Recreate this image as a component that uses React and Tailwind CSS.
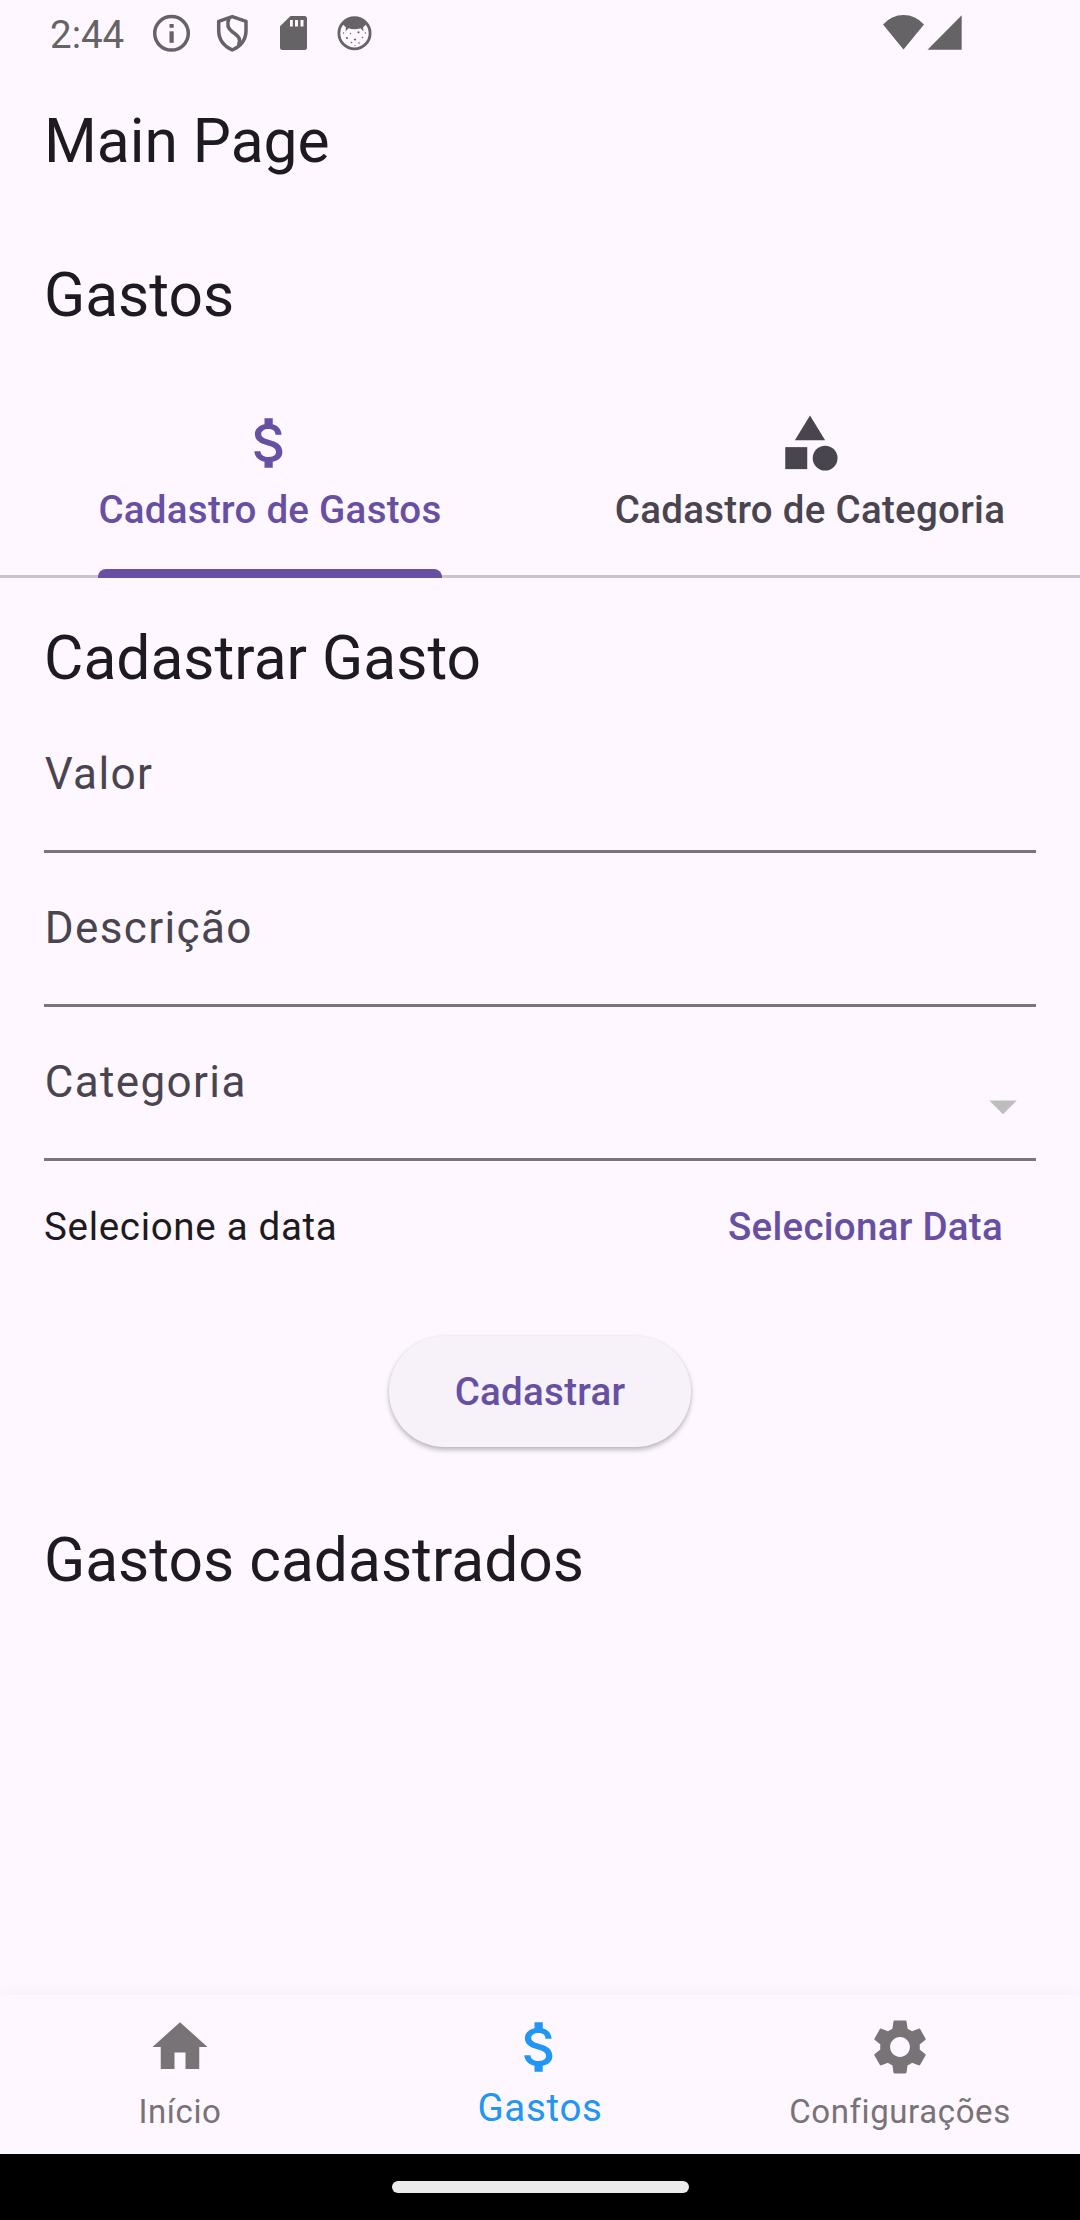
import React from "react";
import { MdAttachMoney, MdCategory, MdHome, MdSettings, MdArrowDropDown } from "react-icons/md";

function InfoIcon() {
  return (
    <svg className="h-[66px] w-10" viewBox="151 0 40 66" fill="none">
      <circle cx="171.5" cy="33.3" r="16.8" stroke="currentColor" strokeWidth="3.5" />
      <rect x="169.5" y="24" width="4.2" height="3.8" fill="currentColor" />
      <rect x="169.5" y="31.3" width="4.2" height="11.5" fill="currentColor" />
    </svg>
  );
}

function ShieldIcon() {
  return (
    <svg className="h-[66px] w-10" viewBox="212 0 40 66" fill="none" stroke="currentColor" strokeWidth="3.5" strokeLinejoin="round">
      <path d="M232.3 16.6 246 21.3V30.5C246 39.5 240.5 46.3 232.3 50 224.200 46.300 218.700 39.500 218.700 30.500V21.300Z" />
      <path d="M229 18.5C226.500 24.500 227.500 28.500 232.500 32 238.500 36.200 241.500 39 238.500 45.500" />
    </svg>
  );
}

function SdCardIcon() {
  return (
    <svg className="h-[66px] w-10" viewBox="273 0 40 66">
      <path
        fill="currentColor"
        fillRule="evenodd"
        d="M290.500 16H304.500Q307 16 307 18.500V47.500Q307 50 304.500 50H282.500Q280 50 280 47.500V26.300ZM290 20V26.500H292.800V20ZM295 20V26.500H298V20ZM300.500 20V26.500H303.500V20Z"
      />
    </svg>
  );
}

function FaceIcon() {
  return (
    <svg className="h-[66px] w-10" viewBox="334 0 40 66" fill="currentColor">
      <circle cx="354.500" cy="33.300" r="15.600" fill="none" stroke="currentColor" strokeWidth="2.800" />
      <path d="M342.500 24C345 19.500 349.500 17 354.500 17S364 19.500 366.500 24L363 27.500 363.500 31.500 360.500 28.300Q354.500 30 348.500 28.300L345.500 31.500 346 27.500Z" />
      <circle cx="347" cy="38" r="1.100" />
      <circle cx="358.500" cy="32.300" r="1.100" />
      <circle cx="355" cy="39.500" r="1.100" />
      <circle cx="362.500" cy="37.500" r="0.800" />
      <circle cx="350.500" cy="33.500" r="0.700" />
      <circle cx="351.500" cy="42.500" r="0.800" />
      <circle cx="359" cy="43" r="0.800" />
      <circle cx="343.500" cy="33" r="0.700" />
      <circle cx="365.500" cy="33" r="0.700" />
      <circle cx="355" cy="45.500" r="0.600" />
    </svg>
  );
}

function StatusBar() {
  return (
    <div className="flex h-[66px] shrink-0 justify-between pl-[50px] pr-[116px] text-[#666366]">
      <div className="flex">
        <span className="w-[101px] pt-3 text-[38.5px] leading-[45px]">2:44</span>
        <div className="flex gap-[21px]">
          <InfoIcon />
          <ShieldIcon />
          <SdCardIcon />
          <FaceIcon />
        </div>
      </div>
      <svg className="h-[66px] w-[84px]" viewBox="880 0 84 66" fill="currentColor">
        <path d="M903.500 49.500 883 24.500Q891.500 15 903.500 15T924 24.500Z" />
        <path d="M927.500 49.700H961.700V15.300Z" />
      </svg>
    </div>
  );
}

function TitleBar({ children }) {
  return (
    <header className="h-[154px] shrink-0 px-11 pt-10">
      <h1 className="text-[60.5px] leading-[71px]">{children}</h1>
    </header>
  );
}

function Tab({ icon: Icon, label, active }) {
  return (
    <div className={active ? "flex justify-center text-[#6750a4]" : "flex justify-center text-[#49454f]"}>
      <div className="flex flex-col items-center pt-9">
        <Icon className="size-[66px]" />
        <span className="mt-[11px] text-[38.5px] leading-[45px] font-medium tracking-[0.275px] whitespace-nowrap">{label}</span>
        {active && <div className="mt-auto h-[9px] w-full rounded-t-[8px] bg-[#6750a4]" />}
      </div>
    </div>
  );
}

function Field({ label, dropdown }) {
  return (
    <div className="flex h-[154px] items-start justify-between border-b-[3px] border-[#79747e] pt-[49px] text-[#49454f]">
      <span className="pl-[0.7px] text-[44px] leading-[52px] tracking-[1.375px]">{label}</span>
      {dropdown && <MdArrowDropDown className="mt-[17px] size-[66px] text-[#bdbdbd]" />}
    </div>
  );
}

function NavItem({ icon: Icon, label, active }) {
  return (
    <div className={active ? "flex flex-col items-center pt-[19px] text-[#2196f3]" : "flex flex-col items-center pt-[19px] text-[#787376]"}>
      <Icon className="size-[66px]" />
      <span
        className={
          active
            ? "mt-[5px] text-[38.5px] leading-[45px] tracking-[0.6875px]"
            : "mt-3 text-[33px] leading-[39px] tracking-[0.589px]"
        }
      >
        {label}
      </span>
    </div>
  );
}

export default function App() {
  return (
    <div className="flex h-[2220px] w-[1080px] flex-col overflow-hidden bg-[#fef7ff] font-['Roboto',sans-serif] text-[#1d1b20]">
      <StatusBar />
      <TitleBar>Main Page</TitleBar>
      <TitleBar>Gastos</TitleBar>

      <div className="grid h-[204px] shrink-0 grid-cols-2 bg-[linear-gradient(to_top,#cac4d0_3px,transparent_3px)]">
        <Tab icon={MdAttachMoney} label="Cadastro de Gastos" active />
        <Tab icon={MdCategory} label="Cadastro de Categoria" />
      </div>

      <main className="flex flex-col px-11 pt-[45px]">
        <h2 className="mb-[5px] text-[60.5px] leading-[71px]">Cadastrar Gasto</h2>
        <Field label="Valor" />
        <Field label="Descrição" />
        <Field label="Categoria" dropdown />
        <div className="mt-[43px] flex justify-between pr-[33px] text-[38.5px] leading-[45px]">
          <span className="tracking-[0.6875px]">Selecione a data</span>
          <button className="font-medium tracking-[0.275px] text-[#6750a4]">Selecionar Data</button>
        </div>
        <button className="mt-[87px] h-[111px] w-[302px] self-center rounded-full bg-[#f7f2fa] text-[38.5px] leading-[45px] font-medium tracking-[0.275px] text-[#6750a4] shadow-[0_3px_5px_rgba(0,0,0,0.26),0_0_3px_rgba(0,0,0,0.06)]">
          Cadastrar
        </button>
        <h2 className="mt-[78px] text-[60.5px] leading-[71px]">Gastos cadastrados</h2>
      </main>

      <nav className="mt-auto grid h-[159px] shrink-0 grid-cols-3 bg-[#fef7ff] shadow-[0_0_16px_rgba(0,0,0,0.045)]">
        <NavItem icon={MdHome} label="Início" />
        <NavItem icon={MdAttachMoney} label="Gastos" active />
        <NavItem icon={MdSettings} label="Configurações" />
      </nav>
      <div className="relative flex h-[66px] shrink-0 justify-center bg-black pt-[27px]">
        <div className="h-3 w-[297px] rounded-full bg-[#ebebeb]" />
      </div>
    </div>
  );
}
